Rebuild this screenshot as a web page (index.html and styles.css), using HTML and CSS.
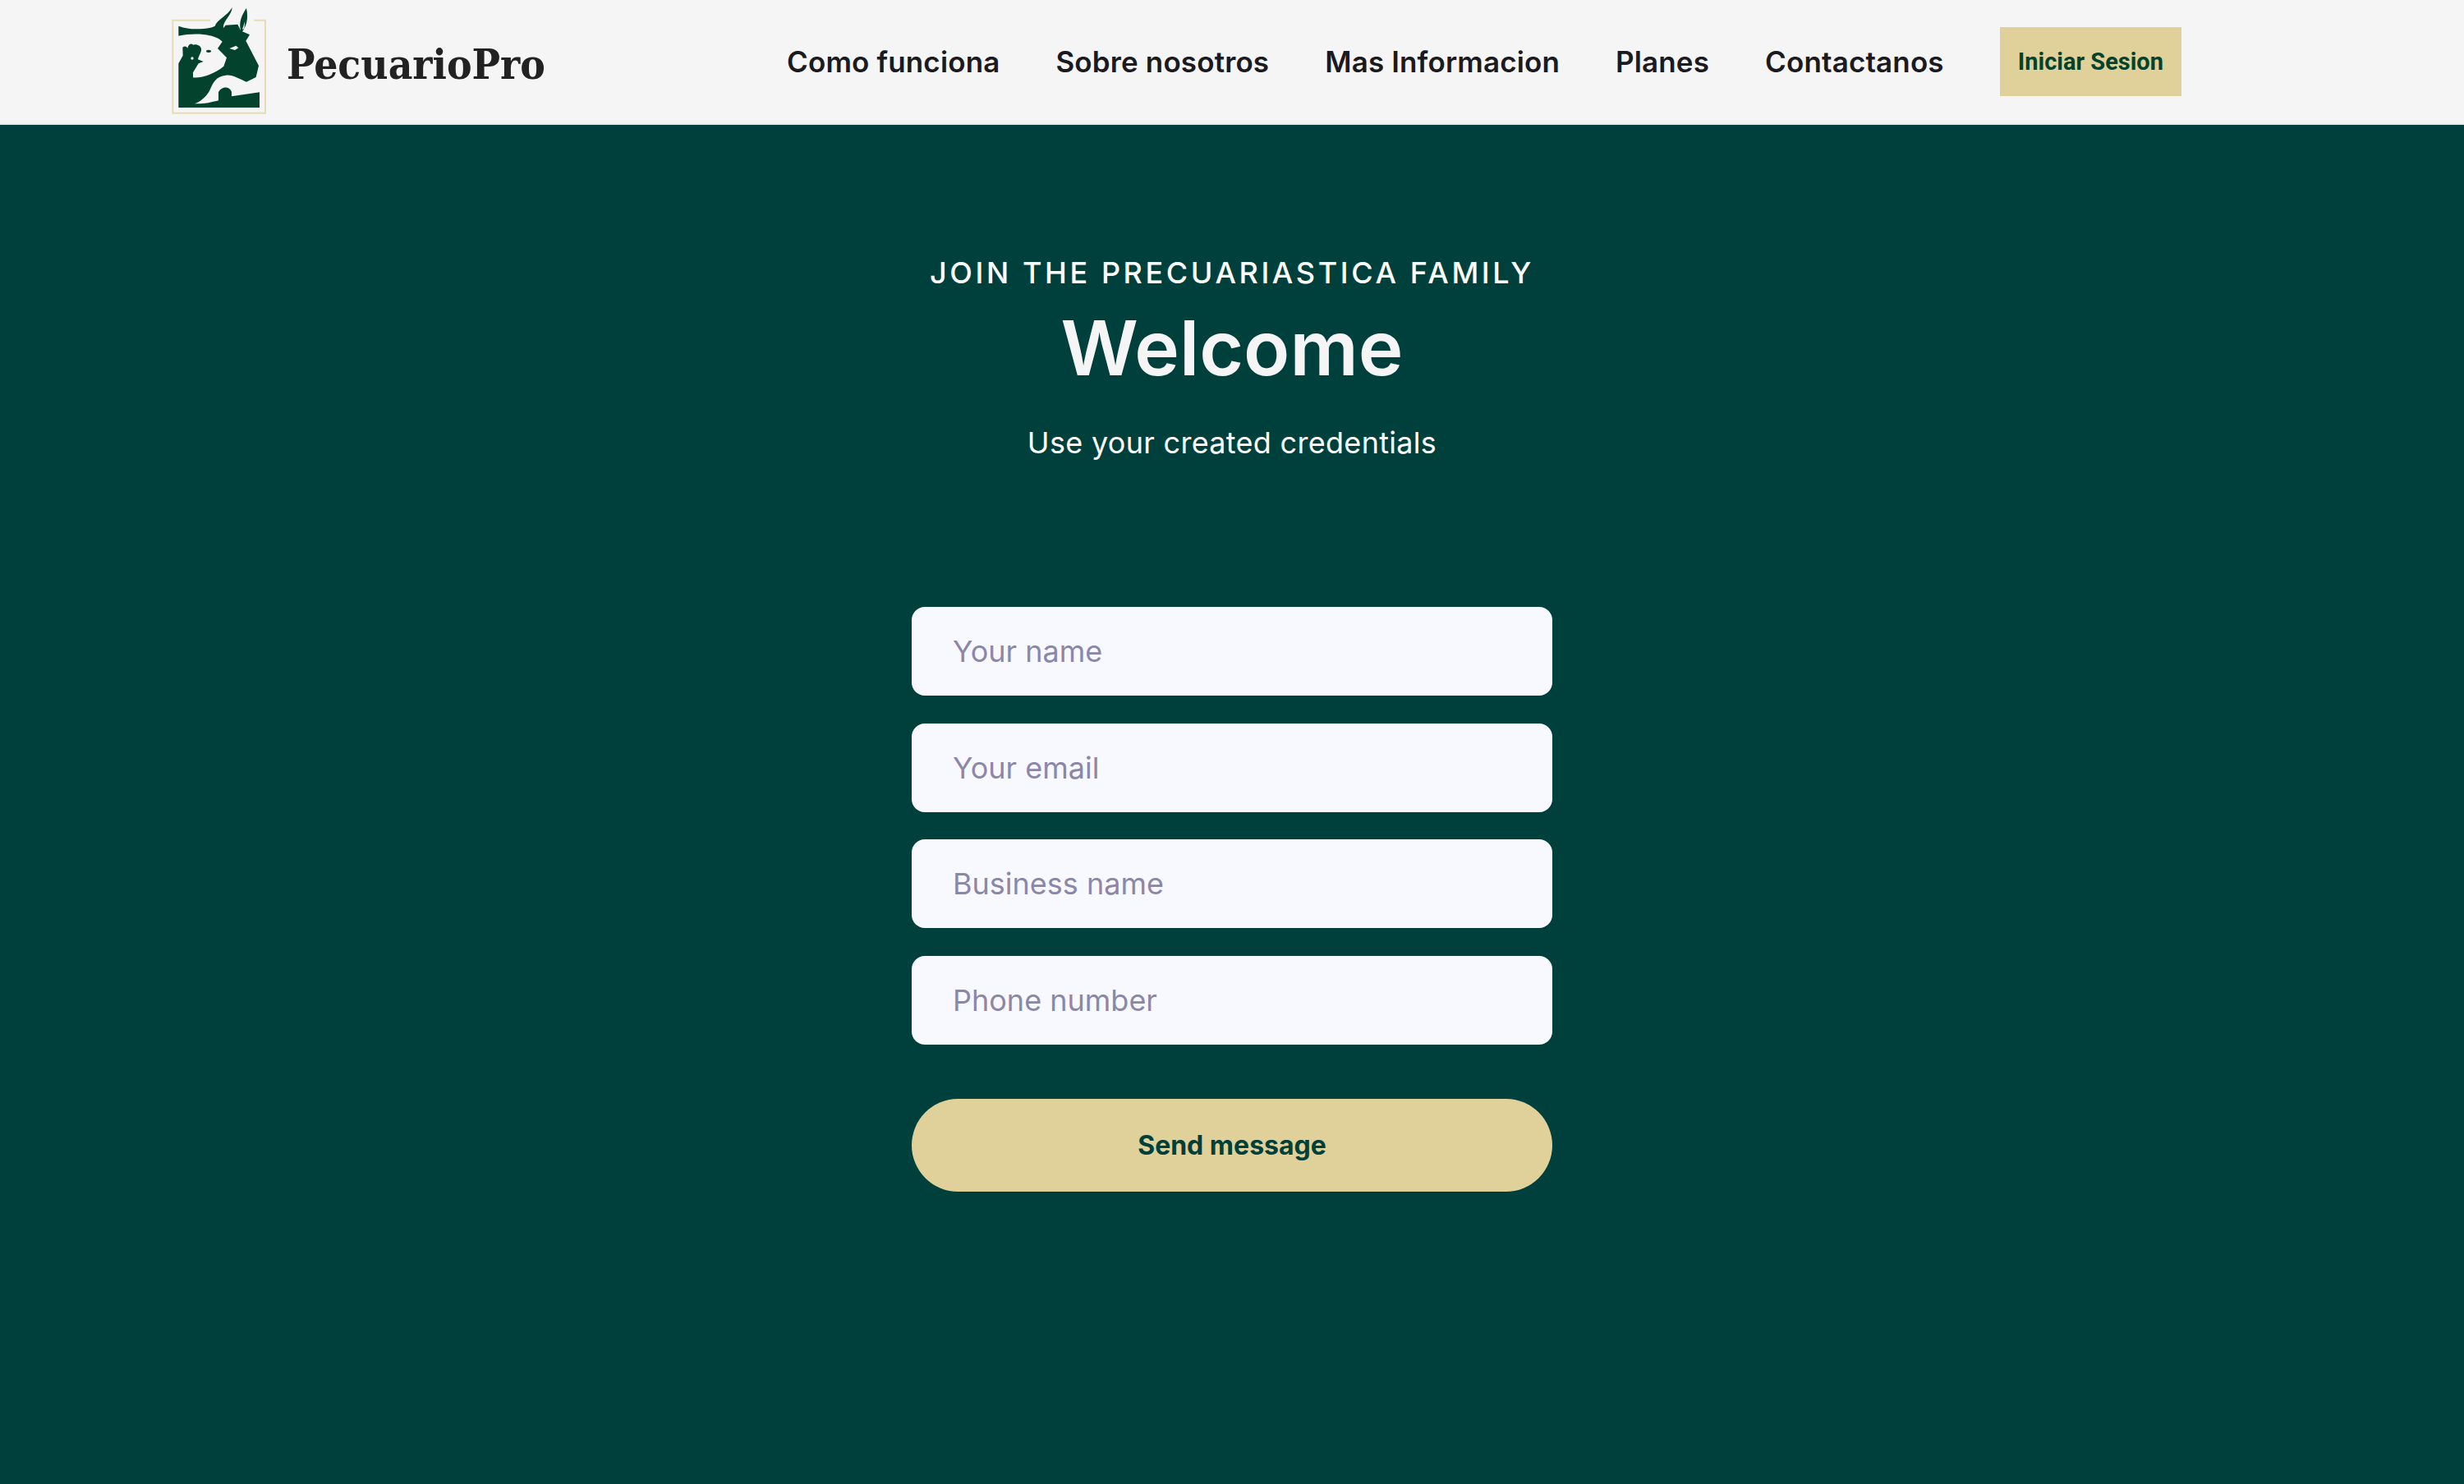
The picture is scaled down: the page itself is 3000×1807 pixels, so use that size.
FILE: index.html
```html
<!DOCTYPE html>
<html lang="en">
<head>
    <meta charset="UTF-8">
    <meta name="viewport" content="width=device-width, initial-scale=1.0">
    <title>PecuarioPro</title>
    <link rel="stylesheet" href="styles.css">
</head>
<body>

<header class="topbar">
    <a class="brand" href="#">
        <svg class="brand-logo" viewBox="0 0 420 420" aria-hidden="true">
            <path class="logo-frame" d="M168 47H31V386H369V47H328"/>
            <path class="logo-mark" d="M52 68C75 76 95 79 115 79C145 79 170 76 185 68C192 45 232 30 248 0C247 30 212 50 216 76L224 65L268 62L279 84C272 55 282 30 300 3C306 30 305 62 285 88L312 100L298 122L345 213L335 255L300 272C275 262 250 245 225 248C190 252 180 270 165 305C150 330 130 345 110 352C150 352 180 345 198 340V310C205 292 235 282 246 308V325L348 310V366H52V205L68 176L67 146C74 140 84 142 85 150C88 132 100 130 106 137C118 132 134 140 135 152C136 165 126 175 123 190L143 198L125 205L105 238L105 256C135 260 190 240 217 215L228 184L195 150L212 125C190 100 120 90 52 104Z"/>
            <path class="logo-cut" d="M238 150L262 140L271 148L258 156Z"/>
            <path class="logo-cut" d="M285 80L295 50L292 78Z"/>
            <circle class="logo-cut" cx="102" cy="186" r="5"/>
            <ellipse class="logo-mark" cx="162" cy="160" rx="9" ry="5"/>
        </svg>
        <span class="brand-name">PecuarioPro</span>
    </a>
    <nav class="menu">
        <a href="#">Como funciona</a>
        <a href="#">Sobre nosotros</a>
        <a href="#">Mas Informacion</a>
        <a href="#">Planes</a>
        <a href="#">Contactanos</a>
        <a class="login" href="#">Iniciar Sesion</a>
    </nav>
</header>

<main class="welcome">
    <p class="eyebrow">JOIN THE PRECUARIASTICA FAMILY</p>
    <h1>Welcome</h1>
    <p class="lead">Use your created credentials</p>

    <form class="signup">
        <input type="text" placeholder="Your name">
        <input type="email" placeholder="Your email">
        <input type="text" placeholder="Business name">
        <input type="tel" placeholder="Phone number">
        <button type="button">Send message</button>
    </form>
</main>

</body>
</html>
```

FILE: styles.css
```css
body {
    font-family: 'Inter', sans-serif;
    background-color: #00403c;
    margin: 0;
    min-height: 1807px;
}
.topbar {
    display: flex;
    align-items: center;
    justify-content: space-between;
    box-sizing: border-box;
    height: 152px;
    padding: 0 344px 0 200px;
    background-color: #f5f5f5;
    border-bottom: 2px solid #e8eaf0;
}
.brand {
    display: flex;
    align-items: center;
    gap: 9px;
    text-decoration: none;
}
.brand-logo {
    width: 140px;
    height: 140px;
    margin-top: 8px;
}
.logo-frame {
    fill: none;
    stroke: #e8dcb4;
    stroke-width: 6;
}
.logo-mark {
    fill: #03432e;
}
.logo-cut {
    fill: #f5f5f5;
}
.brand-name {
    margin-top: 6px;
    font-family: 'DejaVu Serif Condensed', 'DejaVu Serif', serif;
    font-size: 51px;
    font-weight: 700;
    color: #222;
}
.menu {
    display: flex;
    align-items: center;
    gap: 68px;
}
.menu a {
    font-size: 35px;
    font-weight: 600;
    letter-spacing: 0.14px;
    color: #1a1a1f;
    text-decoration: none;
}
.menu .login {
    display: flex;
    align-items: center;
    height: 84px;
    padding: 0 22px;
    background-color: #dfd199;
    font-family: 'Roboto', sans-serif;
    font-size: 29px;
    font-weight: 700;
    letter-spacing: 0;
    color: #03432e;
}
.welcome {
    display: flex;
    flex-direction: column;
    align-items: center;
    padding-top: 156px;
    color: #fff;
}
.eyebrow {
    margin: 0;
    font-size: 36px;
    line-height: 48px;
    font-weight: 500;
    letter-spacing: 3.6px;
}
h1 {
    margin: 12px 0 0;
    font-size: 92.5px;
    line-height: 110px;
    font-weight: 600;
    color: #f5f5f5;
}
.lead {
    margin: 37px 0 0;
    font-size: 36px;
    line-height: 48px;
    letter-spacing: 0.3px;
}
.signup {
    display: flex;
    flex-direction: column;
    gap: 33.6px;
    width: 780px;
    margin-top: 176px;
}
.signup input {
    box-sizing: border-box;
    height: 108px;
    padding: 0 50px;
    background-color: #f8f8ff;
    border: none;
    border-radius: 16px;
    font-family: inherit;
    font-size: 36px;
}
.signup input::placeholder {
    color: #8b87a8;
    opacity: 1;
}
.signup button {
    height: 113px;
    margin-top: 33px;
    background-color: #dfd199;
    border: none;
    border-radius: 57px;
    font-family: inherit;
    font-size: 32px;
    font-weight: 700;
    color: #00403c;
    cursor: pointer;
}
```
